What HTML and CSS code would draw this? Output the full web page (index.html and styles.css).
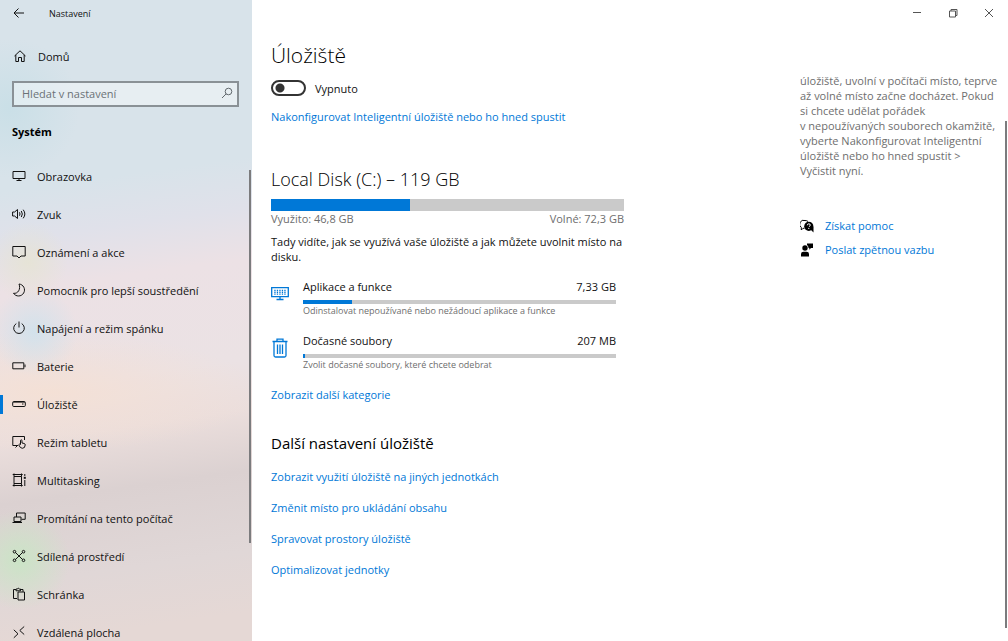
FILE: index.html
```
<!DOCTYPE html>
<html lang="cs">

<head>
    <meta charset="UTF-8">
    <title>Nastavení</title>
    <meta name="viewport" content="width=device-width, initial-scale=1">
    <link rel="stylesheet" href="styles.css">
</head>

<body>
    <aside class="sidebar">
        <header class="sidebar__bar">
            <button class="sidebar__back" type="button" aria-label="Zpět">
                <svg class="icon" viewBox="0 0 14 14"><path d="M6.500 2.500 2 7l4.500 4.500M2 7h10" /></svg>
            </button>
            <span class="sidebar__app">Nastavení</span>
        </header>
        <a class="nav__link nav__link--home" href="#home">
            <svg class="icon" viewBox="0 0 14 14"><path d="M1.500 7 7 1.800 12.500 7M2.800 6v6.500h2.700v-4h3v4h2.700V6" /></svg>
            Domů
        </a>
        <form class="search" role="search">
            <input class="search__input" type="text" placeholder="Hledat v nastavení" aria-label="Hledat v nastavení">
            <svg class="search__icon" viewBox="0 0 12 12"><circle cx="7.500" cy="4.500" r="3.300" /><path d="M5.100 6.900 1 11" /></svg>
        </form>
        <h2 class="sidebar__title">Systém</h2>
        <nav class="nav">
            <a class="nav__link" href="#display">
                <svg class="icon" viewBox="0 0 14 14"><path d="M1 2.500h12v7H1zM7 9.500v2M4.500 11.500h5" /></svg>
                Obrazovka
            </a>
            <a class="nav__link" href="#sound">
                <svg class="icon" viewBox="0 0 14 14"><path d="M.6 5v4h2L5.500 11.500v-9L2.600 5zM7.500 5.300q1 1.700 0 3.400M9.300 4q2 3 0 6M11.200 2.700q3.300 4.300 0 8.600" /></svg>
                Zvuk
            </a>
            <a class="nav__link" href="#notifications">
                <svg class="icon" viewBox="0 0 14 14"><path d="M.8 1.500h12.400v9.500H9l-2 2-2-2H.8z" /></svg>
                Oznámení a akce
            </a>
            <a class="nav__link" href="#focus">
                <svg class="icon" viewBox="0 0 14 14"><path d="M7 1a6 6 0 1 1-5.500 9.300C6 11 9 6 7 1z" /></svg>
                Pomocník pro lepší soustředění
            </a>
            <a class="nav__link" href="#power">
                <svg class="icon" viewBox="0 0 14 14"><path d="M4.300 2.600a5.300 5.300 0 1 0 5.400 0M7 .5v6" /></svg>
                Napájení a režim spánku
            </a>
            <a class="nav__link" href="#battery">
                <svg class="icon" viewBox="0 0 14 14"><path d="M.8 3.800h11v6H.8zM13 5.500v2.700" /></svg>
                Baterie
            </a>
            <a class="nav__link nav__link--active" href="#storage" aria-current="page">
                <svg class="icon" viewBox="0 0 14 14"><rect x=".7" y="4.500" width="12.600" height="5" rx="1" /><path d="M1 5.500h12" stroke-width=".6" /><path d="M10 7h1.500" /></svg>
                Úložiště
            </a>
            <a class="nav__link" href="#tablet">
                <svg class="icon" viewBox="0 0 14 14"><path d="M6 10.500H.8v-9h11.700V5M3.500 12.500l2-2" /><path d="M8.500 9.500V5.300q.8-1 1.500 0V8l2.300.5q1 .3.900 1.500-.1 3.300-2.900 3.300-2.200 0-3.600-3.500.7-1.200 1.800-.3z" /></svg>
                Režim tabletu
            </a>
            <a class="nav__link" href="#multitasking">
                <svg class="icon" viewBox="0 0 14 14"><path d="M2 3.500h7.500v7H2zM.7 1.500h10M.7 12.500h10M2 .5v3M9.500 .5v3M2 10.500v3M9.500 10.500v3M12.800 1v2M12.800 7v6" /><path class="icon__solid" d="M11.800 3.800h2v2h-2z" /></svg>
                Multitasking
            </a>
            <a class="nav__link" href="#projecting">
                <svg class="icon" viewBox="0 0 14 14"><path d="M4.500 6V2h8.700v6.300H9.500M2 6h7v4.500H2zM.5 11.500h9.500" /></svg>
                Promítání na tento počítač
            </a>
            <a class="nav__link" href="#shared">
                <svg class="icon" viewBox="0 0 14 14"><path d="m3.500 3.500 7 7M10.500 3.500l-7 7" /><circle cx="2.500" cy="2.700" r="1.300" /><circle cx="11.500" cy="2.700" r="1.300" /><circle cx="2.500" cy="11.300" r="1.300" /><circle cx="11.500" cy="11.300" r="1.300" /></svg>
                Sdílená prostředí
            </a>
            <a class="nav__link" href="#clipboard">
                <svg class="icon" viewBox="0 0 14 14"><path d="M5 11.500H1.500v-9h2.500M8.500 2.500H11v2.300M4 3.800V2h1.200q1-1.800 2 0h1.300v1.800zM6 5h6.500v8H6z" /></svg>
                Schránka
            </a>
            <a class="nav__link" href="#remote">
                <svg class="icon" viewBox="0 0 14 14"><path d="m1.800 4.800 4.200 4-4.200 4M12.200 1.500l-4.400 4 4.400 4" /></svg>
                Vzdálená plocha
            </a>
        </nav>
        <span class="scrollbar scrollbar--nav"></span>
    </aside>

    <div class="window">
        <div class="window__controls">
            <button class="window__btn" type="button" aria-label="Minimalizovat">
                <svg class="icon" viewBox="0 0 14 14"><path d="M3 6.500h8" /></svg>
            </button>
            <button class="window__btn" type="button" aria-label="Obnovit">
                <svg class="icon" viewBox="0 0 14 14"><path d="M3.500 5h6v6h-6zM5 5V3.500h6v6H9.500" /></svg>
            </button>
            <button class="window__btn" type="button" aria-label="Zavřít">
                <svg class="icon" viewBox="0 0 14 14"><path d="m3 3 8 8M11 3l-8 8" /></svg>
            </button>
        </div>
        <div class="page">
            <main class="content">
                <h1 class="content__title">Úložiště</h1>
                <label class="toggle">
                    <input class="toggle__input" type="checkbox" role="switch">
                    Vypnuto
                </label>
                <a class="link" href="#sense">Nakonfigurovat Inteligentní úložiště nebo ho hned spustit</a>

                <section class="disk">
                    <h2 class="disk__title">Local Disk (C:) – 119 GB</h2>
                    <div class="bar bar--large"><div class="bar__fill" style="width: 39.3%"></div></div>
                    <div class="disk__legend">
                        <span>Využito: 46,8 GB</span>
                        <span>Volné: 72,3 GB</span>
                    </div>
                    <p class="disk__text">Tady vidíte, jak se využívá vaše úložiště a jak můžete uvolnit místo na disku.</p>

                    <a class="category" href="#apps">
                        <svg class="category__icon" viewBox="0 0 18 20"><path d="M.7 3.700h16.600v9H.7zM9 12.700v2.500M5.500 15.500h7" /><path d="M3.300 6.500h12M3.300 8.300h12M3.300 10.100h12" stroke-dasharray="1.300 1.200" /></svg>
                        <span class="category__body">
                            <span class="category__head"><span>Aplikace a funkce</span><span>7,33 GB</span></span>
                            <span class="bar"><span class="bar__fill" style="width: 15.6%"></span></span>
                            <span class="category__hint">Odinstalovat nepoužívané nebo nežádoucí aplikace a funkce</span>
                        </span>
                    </a>
                    <a class="category" href="#temp">
                        <svg class="category__icon" viewBox="0 0 18 20"><path d="M1.500 3.500h15M6 3.500V1.200h6v2.300M3 3.500v14q0 1.500 1.500 1.500h9q1.500 0 1.500-1.500v-14M6.500 6.500v9.500M9 6.500v9.500M11.500 6.500v9.500" /></svg>
                        <span class="category__body">
                            <span class="category__head"><span>Dočasné soubory</span><span>207 MB</span></span>
                            <span class="bar"><span class="bar__fill" style="width: 0.5%"></span></span>
                            <span class="category__hint">Zvolit dočasné soubory, které chcete odebrat</span>
                        </span>
                    </a>
                    <a class="link" href="#more">Zobrazit další kategorie</a>
                </section>

                <section class="more">
                    <h3 class="more__title">Další nastavení úložiště</h3>
                    <a class="link" href="#drives">Zobrazit využití úložiště na jiných jednotkách</a>
                    <a class="link" href="#location">Změnit místo pro ukládání obsahu</a>
                    <a class="link" href="#spaces">Spravovat prostory úložiště</a>
                    <a class="link" href="#optimize">Optimalizovat jednotky</a>
                </section>
            </main>

            <aside class="help">
                <p class="help__text">úložiště, uvolní v počítači místo, teprve až volné místo začne docházet. Pokud si chcete udělat pořádek v&nbsp;nepoužívaných souborech okamžitě, vyberte Nakonfigurovat Inteligentní úložiště nebo ho hned spustit &gt; Vyčistit&nbsp;nyní.</p>
                <a class="help__link" href="#help">
                    <svg class="icon" viewBox="0 0 14 14"><path d="M4.500 9.300H3L1.300 11V8.500A4 4 0 0 1 5 1.500q2 0 3 1" /><circle class="icon__solid" cx="8.800" cy="7.300" r="4.600" /><path class="icon__solid" d="m10 10 3.500 3.500V8z" /><path class="icon__cut" d="M7.300 6.300q0-1.500 1.500-1.500t1.500 1.300q0 .7-1.500 1.800M8.800 9v1" /></svg>
                    Získat pomoc
                </a>
                <a class="help__link" href="#feedback">
                    <svg class="icon" viewBox="0 0 14 14"><circle class="icon__solid" cx="5" cy="5" r="2.700" /><path class="icon__solid" d="M1 13.500V11q0-2.300 2.500-2.300h3q2.500 0 2.500 2.300v2.500zM7 .5h6v4.500h-2L9.300 6.800V5H8.500Q8.500 3 7 2z" /></svg>
                    Poslat zpětnou vazbu
                </a>
            </aside>
        </div>
        <span class="scrollbar scrollbar--page"></span>
    </div>
</body>

</html>
```
FILE: styles.css
```
* {
    box-sizing: border-box;
    margin: 0;
    padding: 0;
}

:root {
    --accent: #0078d7;
    --fg: #111;
    --muted: #6e6e6e;
    --track: #cacaca;
}

body,
button,
input {
    color: var(--fg);
    font: 11px/15px "Open Sans", "Noto Sans", sans-serif;
}

body {
    background: #fff;
    display: flex;
    height: 100vh;
    overflow: hidden;
}

a {
    text-decoration: none;
}

button {
    background: none;
    border: 0;
}

.icon {
    fill: none;
    flex-shrink: 0;
    height: 14px;
    stroke: currentColor;
    width: 14px;
}

.icon__solid {
    fill: currentColor;
    stroke: none;
}

.icon__cut {
    stroke: #fff;
}

/* Sidebar */
.sidebar {
    background:
        radial-gradient(circle at 20px 560px, rgba(200, 230, 196, 0.9), rgba(200, 230, 196, 0) 50px),
        radial-gradient(circle at 34px 332px, rgba(208, 226, 236, 0.9), rgba(208, 226, 236, 0) 44px),
        radial-gradient(circle at 28px 262px, rgba(230, 228, 210, 0.8), rgba(230, 228, 210, 0) 40px),
        radial-gradient(circle at 10px 108px, rgba(198, 222, 230, 0.8), rgba(198, 222, 230, 0) 70px),
        radial-gradient(ellipse 210px 60px at 50px 392px, rgba(245, 224, 212, 0.9), rgba(245, 224, 212, 0)),
        linear-gradient(172deg, #d8e3ea 0, #d8e3ea 190px, #e0e1ea 240px, #ece1e5 290px, #ebe2e4 390px, #ebdedc 440px, #dbd1d1 500px, #e0d7d7 580px, #e5d8d5 641px);
    display: flex;
    flex-direction: column;
    flex-shrink: 0;
    overflow: hidden;
    position: relative;
    width: 252px;
}

.sidebar__bar {
    align-items: center;
    display: flex;
    flex-shrink: 0;
    gap: 23px;
    height: 26px;
    padding-left: 12px;
}

.sidebar__back {
    height: 14px;
    width: 14px;
}

.sidebar__app {
    font-size: 9px;
}

.sidebar__title {
    color: #000;
    font-size: 11px;
    font-weight: 700;
    margin: 17px 13px 18px 12px;
}

.search {
    align-items: center;
    background: rgba(255, 255, 255, 0.4);
    border: 2px solid #8a9196;
    display: flex;
    flex-shrink: 0;
    height: 26px;
    margin: 6px 13px 0 12px;
    padding: 0 4px 2px 8px;
}

.search__input {
    background: none;
    border: 0;
    flex: 1;
    min-width: 0;
    outline: 0;
}

.search__input::placeholder {
    color: #6b7277;
    opacity: 1;
}

.search__icon {
    fill: none;
    height: 12px;
    stroke: #62696e;
    width: 12px;
}

.nav__link {
    align-items: center;
    color: var(--fg);
    display: flex;
    flex-shrink: 0;
    gap: 11px;
    height: 38px;
    padding-left: 12px;
    position: relative;
}

.nav__link--home {
    margin-top: 11px;
    padding-left: 13px;
}

.nav__link--active::before {
    background: var(--accent);
    content: "";
    height: 19px;
    left: 0;
    position: absolute;
    width: 3px;
}

.scrollbar {
    background: #7b7b7d;
    position: absolute;
    width: 2px;
}

.scrollbar--nav {
    bottom: 98px;
    right: 1px;
    top: 170px;
}

.scrollbar--page {
    bottom: 13px;
    right: 1px;
    top: 121px;
}

/* Window */
.window {
    flex: 1;
    min-width: 0;
    position: relative;
}

.window__controls {
    display: flex;
    height: 26px;
    justify-content: flex-end;
    padding-right: 1px;
}

.window__btn {
    align-items: center;
    color: #555;
    display: flex;
    justify-content: center;
    width: 36px;
}

.page {
    display: flex;
    justify-content: space-between;
    padding: 0 9px 0 19px;
}

.content {
    width: 353px;
}

.content__title {
    color: #000;
    font-size: 21px;
    font-weight: 300;
    line-height: 30px;
    margin: 14px 0 10px;
}

.toggle {
    align-items: center;
    display: flex;
    gap: 9px;
    margin-bottom: 13px;
}

.toggle__input {
    appearance: none;
    background: radial-gradient(circle at 7px 50%, #333 4px, transparent 5px);
    border: 2px solid #333;
    border-radius: 8px;
    height: 16px;
    width: 35px;
}

.link {
    color: var(--accent);
    display: block;
}

.bar {
    background: var(--track);
    display: block;
    height: 4px;
}

.bar--large {
    height: 12px;
}

.bar__fill {
    background: var(--accent);
    display: block;
    height: 100%;
}

.disk {
    margin-top: 43px;
}

.disk__title {
    color: #000;
    font-size: 18px;
    font-weight: 300;
    line-height: 24px;
    margin-bottom: 8px;
}

.disk__legend {
    color: var(--muted);
    display: flex;
    justify-content: space-between;
}

.disk__text {
    margin: 8px 0 15px;
}

.category {
    color: var(--fg);
    display: flex;
    gap: 14px;
    margin: 0 8px 16px 0;
}

.category__icon {
    fill: none;
    flex-shrink: 0;
    height: 20px;
    margin-top: 5px;
    stroke: var(--accent);
    stroke-width: 1.3;
    width: 18px;
}

.category__body {
    flex: 1;
}

.category__head {
    display: flex;
    justify-content: space-between;
    margin-bottom: 6px;
}

.category__hint {
    color: var(--muted);
    display: block;
    font-size: 9px;
    line-height: 13px;
}

.more {
    margin-top: 30px;
}

.more__title {
    color: #000;
    font-size: 15px;
    font-weight: 400;
    line-height: 22px;
    margin-bottom: 15px;
}

.more .link {
    margin-bottom: 16px;
}

/* Help column */
.help {
    padding-top: 47px;
    width: 199px;
}

.help__text {
    color: var(--muted);
    margin-bottom: 40px;
}

.help__link {
    align-items: center;
    color: var(--accent);
    display: flex;
    gap: 11px;
    margin-bottom: 9px;
}

.help__link .icon {
    color: #000;
}
```
